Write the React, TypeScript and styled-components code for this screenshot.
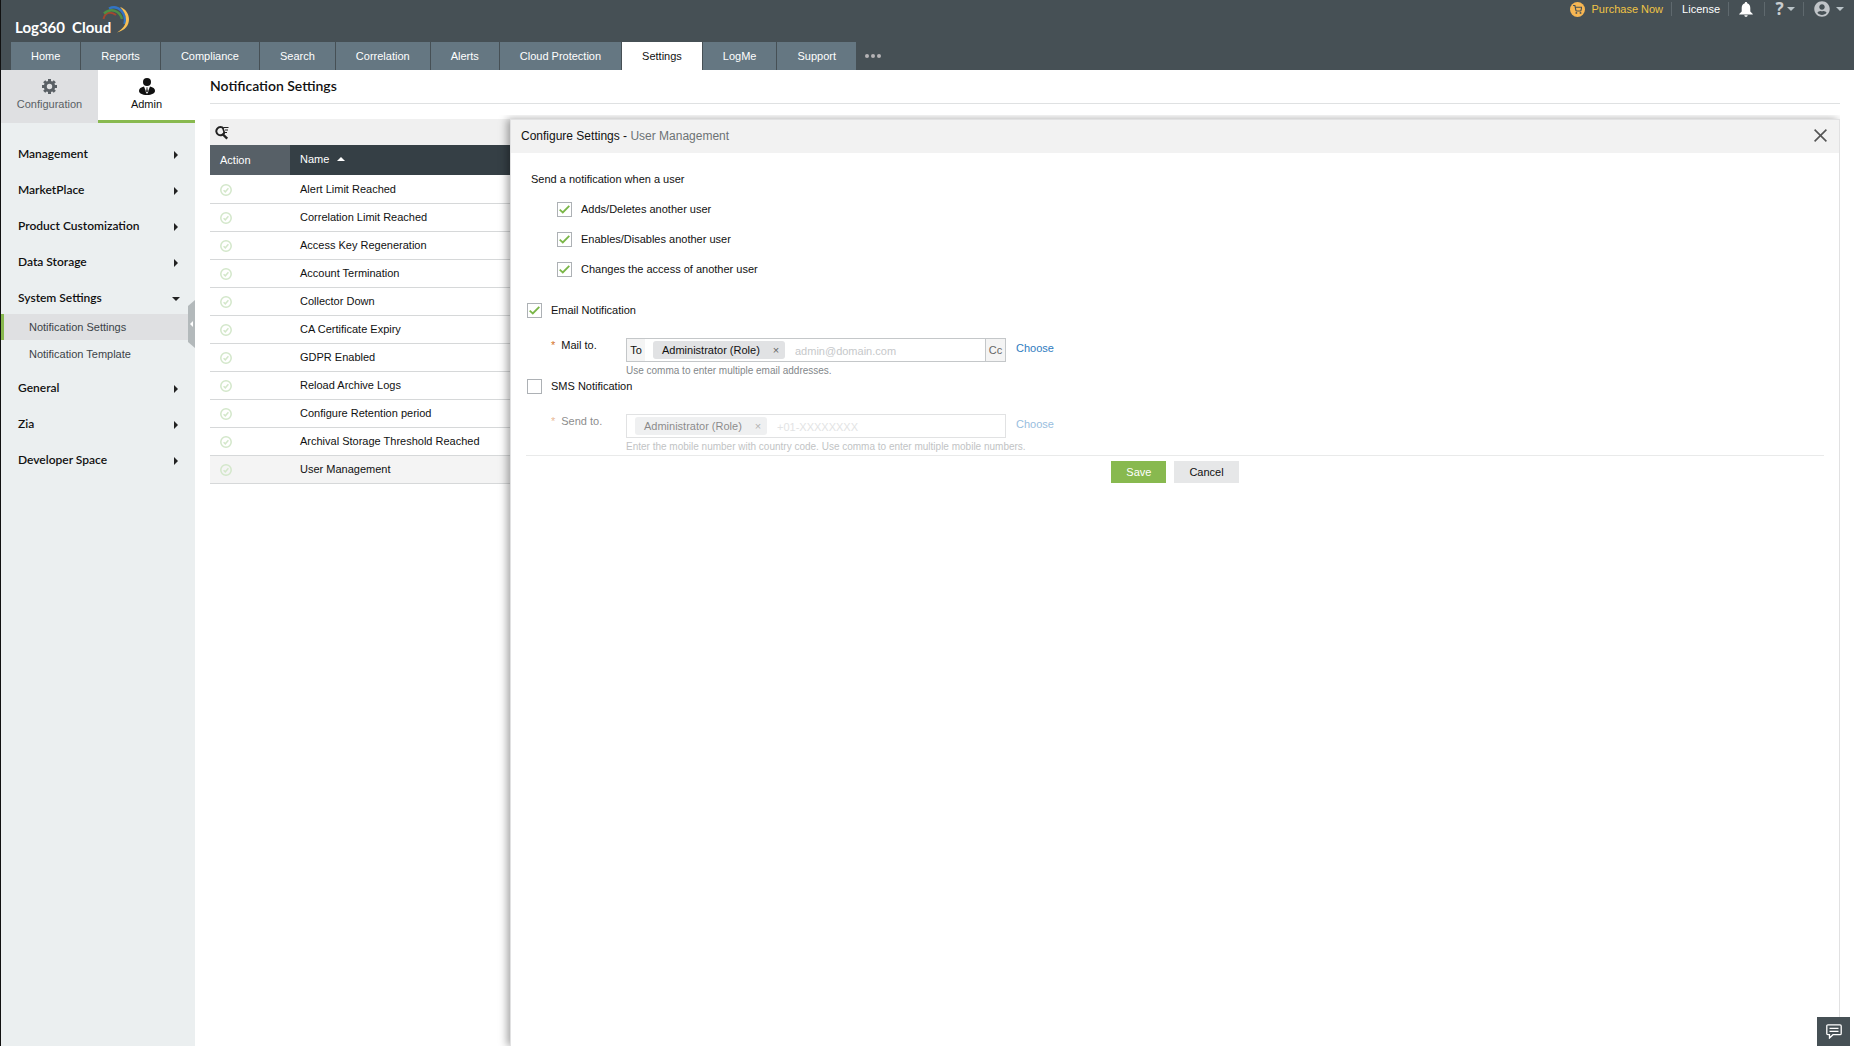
import React, { useState } from "react";
import styled, { createGlobalStyle } from "styled-components";
import { FaUserCircle } from "react-icons/fa";
import { FiShoppingCart } from "react-icons/fi";

const GlobalStyle = createGlobalStyle`
  *, *::before, *::after { box-sizing: border-box; }
  body {
    margin: 0;
    background: #fff;
    color: #111;
    font: 11px/16px "Liberation Sans", Arial, sans-serif;
  }
  button, input { font: inherit; color: inherit; }
  button { padding: 0; border: 0; background: none; cursor: pointer; }
  a { text-decoration: none; color: inherit; }
  ul { list-style: none; margin: 0; padding: 0; }
  h1, h2 { margin: 0; font-weight: normal; }
  svg { display: block; flex: none; }
`;

const Page = styled.div`
  display: flex;
  flex-direction: column;
  min-height: 100vh;
  border-left: 1px solid #111;
`;

const Header = styled.header`
  display: flex;
  flex-direction: column;
  background: #465055;
`;

const TopBar = styled.div`
  display: flex;
  justify-content: space-between;
  align-items: flex-start;
  height: 42px;
  padding: 0 9px 0 14px;
`;

const Logo = styled.a`
  position: relative;
  display: flex;
  gap: 7px;
  padding: 17px 19px 0 0;
  color: #fff;
  font: bold 15px/20px Lato, sans-serif;
`;

const LogoArcs = styled.svg`
  position: absolute;
  top: 4px;
  right: 0;
`;

const Utilities = styled.div`
  display: flex;
  align-items: center;
  height: 18px;
`;

const Utility = styled.button<{ $tone?: string; $gap?: number; $end?: number }>`
  display: flex;
  align-items: center;
  gap: ${(p) => p.$gap || 7}px;
  height: 14px;
  padding: 0 ${(p) => p.$end || 8}px 0 10px;
  color: ${(p) => p.$tone || "#fff"};
  border-right: 1px solid #5f696e;
  &:last-child { border-right: 0; }
`;

const CartBadge = styled.span`
  display: grid;
  place-items: center;
  width: 15px;
  height: 15px;
  border-radius: 50%;
  background: #f6b653;
  color: #465055;
`;

const HelpMark = styled.span`
  width: 9px;
  font: bold 17px/16px "Noto Sans", sans-serif;
  color: #c9cdcf;
`;

const Caret = styled.span<{ $dir: "up" | "down" | "left" | "right"; $color?: string }>`
  flex: none;
  border: 4px solid transparent;
  ${(p) => {
    const c = p.$color || "#222";
    if (p.$dir === "up") return `border-bottom-color:${c};border-top-width:0;`;
    if (p.$dir === "down") return `border-top-color:${c};border-bottom-width:0;`;
    if (p.$dir === "left") return `border-right-color:${c};border-left-width:0;border-width:3px 3px 3px 0;`;
    return `border-left-color:${c};border-right-width:0;`;
  }}
`;

const NavTabs = styled.nav`
  display: flex;
  gap: 1px;
  height: 28px;
  padding-left: 10px;
`;

const NavTab = styled.a<{ $active?: boolean }>`
  display: flex;
  align-items: center;
  padding: 0 20px;
  background: ${(p) => (p.$active ? "#fff" : "#657782")};
  color: ${(p) => (p.$active ? "#111" : "#fff")};
`;

const MoreTabs = styled.button`
  display: flex;
  align-items: center;
  gap: 2px;
  padding: 0 8px;
  & > i { width: 4px; height: 4px; border-radius: 50%; background: #b5b3b5; }
`;

const Body = styled.div`
  display: flex;
  flex: 1;
`;

const Sidebar = styled.aside`
  position: relative;
  flex: none;
  width: 194px;
  background: #ebeff0;
`;

const SideTabs = styled.div`
  display: grid;
  grid-template-columns: 1fr 1fr;
  height: 53px;
`;

const SideTab = styled.button<{ $active?: boolean }>`
  display: flex;
  flex-direction: column;
  align-items: center;
  gap: 1px;
  padding-top: 8px;
  background: ${(p) => (p.$active ? "#fff" : "#dfe0e2")};
  color: ${(p) => (p.$active ? "#111" : "#5a6065")};
  border-bottom: 3px solid ${(p) => (p.$active ? "#88b94f" : "#dfe0e2")};
`;

const SideMenu = styled.ul`
  display: flex;
  flex-direction: column;
  gap: 4px;
  padding-top: 15px;
`;

const SideGroup = styled.button`
  display: flex;
  align-items: center;
  justify-content: space-between;
  width: 100%;
  height: 32px;
  padding: 0 15px 0 17px;
  font: 600 12px/16px Lato, sans-serif;
  color: #111;
`;

const ArrowSlot = styled.span`
  display: flex;
  justify-content: center;
  width: 8px;
  padding-top: 2px;
`;

const SubMenu = styled.ul`
  display: flex;
  flex-direction: column;
  gap: 1px;
  padding-bottom: 1px;
`;

const SubItem = styled.a<{ $active?: boolean }>`
  display: flex;
  align-items: center;
  height: 26px;
  padding-left: 25px;
  color: #3c4348;
  background: ${(p) => (p.$active ? "#dfe0e2" : "transparent")};
  border-left: 3px solid ${(p) => (p.$active ? "#88b94f" : "transparent")};
`;

const Collapse = styled.button`
  position: absolute;
  top: 230px;
  right: 0;
  display: grid;
  place-items: center;
  width: 7px;
  height: 48px;
  background: #b3b9bb;
  clip-path: polygon(100% 0, 100% 100%, 0 42px, 0 6px);
`;

const Main = styled.main`
  display: flex;
  flex-direction: column;
  flex: 1;
  min-width: 0;
  padding: 0 14px 0 15px;
`;

const PageTitle = styled.h1`
  height: 34px;
  border-bottom: 1px solid #dfe1e2;
  font: 600 14px/32px Lato, sans-serif;
  color: #111;
`;

const Workspace = styled.section`
  position: relative;
  flex: 1;
  margin-top: 15px;
`;

const ListTools = styled.div`
  display: flex;
  align-items: center;
  height: 26px;
  padding: 2px 0 0 5px;
  background: #f0f0f0;
`;

const Table = styled.table`
  width: 100%;
  border-collapse: collapse;
  table-layout: fixed;
`;

const Th = styled.th<{ $width?: number; $light?: boolean }>`
  width: ${(p) => (p.$width ? `${p.$width}px` : "auto")};
  height: 30px;
  padding: 0 10px;
  background: ${(p) => (p.$light ? "#576067" : "#353f45")};
  color: #fff;
  font-weight: normal;
  text-align: left;
`;

const SortLabel = styled.span`
  display: flex;
  align-items: center;
  gap: 8px;
  padding-bottom: 2px;
`;

const Tr = styled.tr<{ $active?: boolean }>`
  background: ${(p) => (p.$active ? "#f4f4f4" : "#fff")};
`;

const Td = styled.td`
  height: 28px;
  padding: 0 10px;
  border-bottom: 1px solid #d6d8d9;
`;

const StatusTd = styled(Td)`
  padding-top: 2px;
`;

const Panel = styled.section`
  position: absolute;
  inset: 0 0 0 300px;
  border: 1px solid #e1e1e2;
  border-bottom: 0;
  background: #fff;
  box-shadow: -3px 0 8px rgba(0, 0, 0, 0.35);
  clip-path: inset(-4px 0 0 -14px);
`;

const PanelHead = styled.div`
  display: flex;
  align-items: center;
  justify-content: space-between;
  height: 33px;
  padding: 0 12px 2px 10px;
  background: #f2f2f2;
`;

const PanelTitle = styled.h2`
  font-size: 12px;
  & > span { color: #6d7275; }
`;

const Form = styled.form`
  padding: 18px 15px 0 16px;
`;

const Group = styled.fieldset`
  display: flex;
  flex-direction: column;
  gap: 14px;
  margin: 0;
  padding: 0 4px;
  border: 0;
  min-width: 0;
`;

const Legend = styled.legend`
  padding: 0;
  margin-bottom: 14px;
`;

const CheckLine = styled.label<{ $inset?: boolean }>`
  display: flex;
  align-items: center;
  gap: 9px;
  height: 16px;
  padding-left: ${(p) => (p.$inset ? 26 : 0)}px;
`;

const CheckFrame = styled.span`
  display: grid;
  width: 15px;
  height: 15px;
  & > * { grid-area: 1 / 1; place-self: center; }
`;

const CheckInput = styled.input`
  appearance: none;
  width: 15px;
  height: 15px;
  margin: 0;
  border: 1px solid #adb1b5;
  background: #fff;
`;

const Channel = styled.section<{ $first?: boolean }>`
  padding-top: ${(p) => (p.$first ? 25 : 0)}px;
`;

const Fields = styled.div<{ $off?: boolean }>`
  display: flex;
  align-items: flex-start;
  padding: 19px 0 0 24px;
  opacity: ${(p) => (p.$off ? 0.5 : 1)};
`;

const FieldLabel = styled.label`
  display: flex;
  gap: 6px;
  width: 75px;
  & > i { color: #d4742b; font-style: normal; }
`;

const FieldStack = styled.div`
  display: flex;
  flex-direction: column;
  width: 380px;
  padding-top: 1px;
`;

const TokenBox = styled.div<{ $bare?: boolean }>`
  display: flex;
  align-items: center;
  height: 24px;
  border: 1px solid #c4c7c9;
  padding-left: ${(p) => (p.$bare ? 8 : 0)}px;
`;

const Addon = styled.span`
  display: grid;
  place-items: center;
  width: 18px;
  height: 22px;
  margin-right: 8px;
  background: #f4f4f4;
`;

const CcButton = styled.button`
  width: 20px;
  height: 22px;
  border-left: 1px solid #c4c7c9;
  background: #f4f4f4;
  color: #666;
`;

const Token = styled.span`
  display: flex;
  flex: none;
  align-items: center;
  justify-content: space-between;
  width: 132px;
  height: 18px;
  padding: 0 4px 0 9px;
  border-radius: 3px;
  background: #e1e2e4;
  white-space: nowrap;
`;

const TokenRemove = styled.button`
  width: 10px;
  line-height: 16px;
  color: #666;
`;

const TokenInput = styled.input`
  flex: 1;
  min-width: 0;
  height: 22px;
  margin-left: 8px;
  padding: 2px 2px 0;
  border: 0;
  outline: 0;
  background: none;
  &::placeholder { color: #c6c8ca; opacity: 1; }
`;

const Hint = styled.span`
  padding-top: 2px;
  font-size: 10px;
  line-height: 14px;
  color: #83878a;
  white-space: nowrap;
`;

const Choose = styled.a`
  margin: 3px 0 0 10px;
  color: #2f7cc0;
`;

const Footer = styled.div`
  display: flex;
  justify-content: center;
  gap: 8px;
  margin: 1px 0 0 -1px;
  padding-top: 5px;
  border-top: 1px solid #e9eaea;
`;

const Button = styled.button<{ $primary?: boolean }>`
  height: 22px;
  padding: 0 15px;
  background: ${(p) => (p.$primary ? "#88b94f" : "#e6e7e8")};
  color: ${(p) => (p.$primary ? "#fff" : "#111")};
`;

const Chat = styled.button`
  position: fixed;
  right: 4px;
  bottom: 0;
  display: grid;
  place-items: center;
  width: 33px;
  height: 29px;
  background: #465055;
`;

const tabs = ["Home", "Reports", "Compliance", "Search", "Correlation", "Alerts", "Cloud Protection", "Settings", "LogMe", "Support"];

const groups: { name: string; items?: string[] }[] = [
  { name: "Management" },
  { name: "MarketPlace" },
  { name: "Product Customization" },
  { name: "Data Storage" },
  { name: "System Settings", items: ["Notification Settings", "Notification Template"] },
  { name: "General" },
  { name: "Zia" },
  { name: "Developer Space" },
];

const notifications = [
  "Alert Limit Reached",
  "Correlation Limit Reached",
  "Access Key Regeneration",
  "Account Termination",
  "Collector Down",
  "CA Certificate Expiry",
  "GDPR Enabled",
  "Reload Archive Logs",
  "Configure Retention period",
  "Archival Storage Threshold Reached",
  "User Management",
];

const Arcs = () => (
  <LogoArcs width="30" height="30" viewBox="0 0 30 30" fill="none">
    <path d="M3.500 15 C5 8 11 7 16 11" stroke="#a3482f" strokeWidth="2" />
    <path d="M4 9.500 C11 3 20 7 22 15" stroke="#4f8f45" strokeWidth="2.400" />
    <path d="M9 4.500 C18 0 27 9 24.500 20" stroke="#3274c4" strokeWidth="2.400" />
    <path d="M20 3 C32 7 33 25 17 28.500 C29 22 28 11 20 3Z" fill="#f8c057" />
  </LogoArcs>
);

const GearIcon = () => (
  <svg width="17" height="17" viewBox="0 0 17 17" fill="none" stroke="#5a6065">
    <circle cx="8.500" cy="8.500" r="4.200" strokeWidth="3" />
    {[0, 45, 90, 135].map((a) => (
      <path key={a} d="M8.500 1v2.600M8.500 13.400V16" strokeWidth="3" transform={`rotate(${a} 8.500 8.500)`} />
    ))}
  </svg>
);

const BellIcon = () => (
  <svg width="14" height="15" viewBox="0 0 14 15" fill="#fff">
    <path d="M7 0c.8 0 1.200.5 1.200 1.200C10.400 1.800 11.300 3.700 11.300 6v3.500L13.800 12v.6H.2V12l2.500-2.500V6c0-2.300.9-4.200 3.100-4.800C5.800.5 6.200 0 7 0zM5.300 13.300h3.400c-.2 1-.8 1.500-1.700 1.500s-1.500-.5-1.700-1.500z" />
  </svg>
);

const AdminIcon = () => (
  <svg width="16" height="17" viewBox="0 0 16 17" fill="#111">
    <circle cx="8" cy="4" r="4" />
    <path d="M5 8.500 8 16 11 8.500c3 .6 5 2.300 5 4.300 0 2.600-3 4.200-8 4.200s-8-1.600-8-4.200c0-2 2-3.700 5-4.300z" />
    <path d="M6 8.500h4L8.600 10l.7 4L8 15.500 6.700 14l.7-4z" fill="#fff" />
    <path d="M7.300 9.500h1.400l-.3 1 .5 3L8 14.500l-.9-1 .5-3z" />
  </svg>
);

const SearchIcon = () => (
  <svg width="14" height="14" viewBox="0 0 14 14" fill="none" stroke="#222">
    <path d="M8.600 2.600A4.100 4.100 0 1 0 9.300 6.500" strokeWidth="2" />
    <path d="M7.800 2l1.500 4.500L8 8.500" strokeWidth="1.600" />
    <path d="M7.500 8 12.200 12.600" strokeWidth="2.400" />
    <path d="M8.500 1.500h5M10 4h3M10 6.500h2" strokeWidth="1" />
  </svg>
);

const StatusIcon = () => (
  <svg width="12" height="12" viewBox="0 0 12 12" fill="none" stroke="#d3e7ca">
    <circle cx="6" cy="6" r="5.200" strokeWidth="1.500" />
    <path d="M3.600 6.200 5.300 7.800 8.400 4.300" strokeWidth="1.500" />
  </svg>
);

const CloseIcon = () => (
  <svg width="13" height="13" viewBox="0 0 13 13" stroke="#555" strokeWidth="1.600">
    <path d="M.6.6l11.800 11.800M12.400.6.6 12.400" />
  </svg>
);

const ChatIcon = () => (
  <svg width="16" height="15" viewBox="0 0 16 15" fill="none" stroke="#fff" strokeWidth="1.300">
    <path d="M2 .8h12q1.200 0 1.200 1.200v7.500q0 1.200-1.200 1.200H7L3.500 14v-3.300H2Q.8 10.700.8 9.500V2Q.8.800 2 .8z" />
    <path d="M3.500 4.300h9M3.500 7.300h9" />
  </svg>
);

const Checkbox = ({ label, initial, inset }: { label: string; initial?: boolean; inset?: boolean }) => {
  const [on, setOn] = useState(!!initial);
  return (
    <CheckLine $inset={inset}>
      <CheckFrame>
        <CheckInput type="checkbox" checked={on} onChange={() => setOn(!on)} />
        {on && (
          <svg width="11" height="9" viewBox="0 0 11 9" fill="none" stroke="#7ab648" strokeWidth="1.800" pointerEvents="none">
            <path d="M.7 4.600 3.800 7.500 10.300.8" />
          </svg>
        )}
      </CheckFrame>
      {label}
    </CheckLine>
  );
};

const Role = () => (
  <Token>
    Administrator (Role)
    <TokenRemove type="button" aria-label="Remove role">×</TokenRemove>
  </Token>
);

export default function App() {
  return (
    <>
      <GlobalStyle />
      <Page>
        <Header>
          <TopBar>
            <Logo href="#">
              <span>Log360</span>
              <span>Cloud</span>
              <Arcs />
            </Logo>
            <Utilities>
              <Utility $tone="#f0c445">
                <CartBadge><FiShoppingCart size={9} strokeWidth={3} /></CartBadge>
                Purchase Now
              </Utility>
              <Utility>License</Utility>
              <Utility $end={11} aria-label="Alerts"><BellIcon /></Utility>
              <Utility $gap={3} aria-label="Help">
                <HelpMark>?</HelpMark>
                <Caret $dir="down" $color="#b9c3c8" />
              </Utility>
              <Utility $gap={6} $end={1} aria-label="Account">
                <FaUserCircle size={16} color="#c0c4c8" />
                <Caret $dir="down" $color="#b9c3c8" />
              </Utility>
            </Utilities>
          </TopBar>
          <NavTabs>
            {tabs.map((t) => (
              <NavTab key={t} href="#" $active={t === "Settings"}>{t}</NavTab>
            ))}
            <MoreTabs aria-label="More"><i /><i /><i /></MoreTabs>
          </NavTabs>
        </Header>
        <Body>
          <Sidebar>
            <SideTabs>
              <SideTab><GearIcon />Configuration</SideTab>
              <SideTab $active><AdminIcon />Admin</SideTab>
            </SideTabs>
            <SideMenu>
              {groups.map((g) => (
                <li key={g.name}>
                  <SideGroup>
                    {g.name}
                    <ArrowSlot><Caret $dir={g.items ? "down" : "right"} /></ArrowSlot>
                  </SideGroup>
                  {g.items && (
                    <SubMenu>
                      {g.items.map((s, i) => (
                        <li key={s}><SubItem href="#" $active={i === 0}>{s}</SubItem></li>
                      ))}
                    </SubMenu>
                  )}
                </li>
              ))}
            </SideMenu>
            <Collapse aria-label="Collapse menu"><Caret $dir="left" $color="#fff" /></Collapse>
          </Sidebar>
          <Main>
            <PageTitle>Notification Settings</PageTitle>
            <Workspace>
              <ListTools>
                <button aria-label="Search"><SearchIcon /></button>
              </ListTools>
              <Table>
                <thead>
                  <tr>
                    <Th $width={80} $light>Action</Th>
                    <Th><SortLabel>Name<Caret $dir="up" $color="#fff" /></SortLabel></Th>
                  </tr>
                </thead>
                <tbody>
                  {notifications.map((n) => (
                    <Tr key={n} $active={n === "User Management"}>
                      <StatusTd><StatusIcon /></StatusTd>
                      <Td>{n}</Td>
                    </Tr>
                  ))}
                </tbody>
              </Table>
              <Panel>
                <PanelHead>
                  <PanelTitle>Configure Settings - <span>User Management</span></PanelTitle>
                  <button aria-label="Close"><CloseIcon /></button>
                </PanelHead>
                <Form onSubmit={(e) => e.preventDefault()}>
                  <Group>
                    <Legend>Send a notification when a user</Legend>
                    <Checkbox inset initial label="Adds/Deletes another user" />
                    <Checkbox inset initial label="Enables/Disables another user" />
                    <Checkbox inset initial label="Changes the access of another user" />
                  </Group>
                  <Channel $first>
                    <Checkbox initial label="Email Notification" />
                    <Fields>
                      <FieldLabel htmlFor="mail-to"><i>*</i>Mail to.</FieldLabel>
                      <FieldStack>
                        <TokenBox>
                          <Addon>To</Addon>
                          <Role />
                          <TokenInput id="mail-to" placeholder="admin@domain.com" />
                          <CcButton type="button">Cc</CcButton>
                        </TokenBox>
                        <Hint>Use comma to enter multiple email addresses.</Hint>
                      </FieldStack>
                      <Choose href="#">Choose</Choose>
                    </Fields>
                  </Channel>
                  <Channel>
                    <Checkbox label="SMS Notification" />
                    <Fields $off>
                      <FieldLabel htmlFor="send-to"><i>*</i>Send to.</FieldLabel>
                      <FieldStack>
                        <TokenBox $bare>
                          <Role />
                          <TokenInput id="send-to" placeholder="+01-XXXXXXXX" />
                        </TokenBox>
                        <Hint>Enter the mobile number with country code. Use comma to enter multiple mobile numbers.</Hint>
                      </FieldStack>
                      <Choose href="#">Choose</Choose>
                    </Fields>
                  </Channel>
                  <Footer>
                    <Button $primary type="submit">Save</Button>
                    <Button type="button">Cancel</Button>
                  </Footer>
                </Form>
              </Panel>
            </Workspace>
          </Main>
        </Body>
        <Chat aria-label="Chat"><ChatIcon /></Chat>
      </Page>
    </>
  );
}
